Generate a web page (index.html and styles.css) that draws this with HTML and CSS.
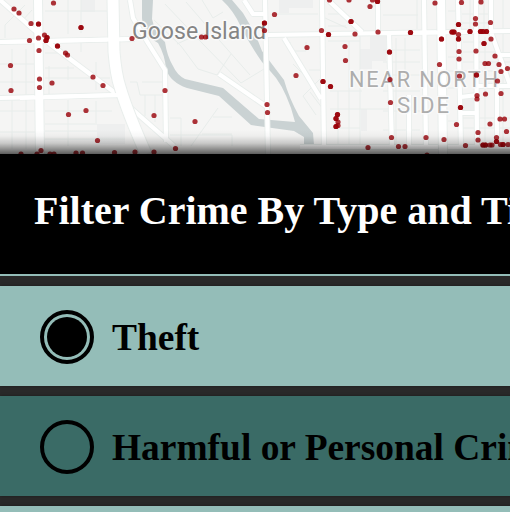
FILE: index.html
```html
<!DOCTYPE html>
<html lang="en">
<head>
<meta charset="utf-8">
<title>Chicago Crime Map</title>
<link rel="stylesheet" href="styles.css">
</head>
<body>
<main class="app">
<section class="map">
<svg class="map-canvas" viewBox="0 0 510 154" width="510" height="154" aria-label="Crime map">
<defs>
<path id="streets" d="M0 42L135 39M0 98L118 95M0 0L50 44L118 95L132 109L174 146M130 0L133 18L148 43L165 70L166 142M244 0L253 14H266M265 0L268 154M268 35L510 31M322 0L324 149M328 0L362 32M378 0V32M389 34L392 149M424 0L426 149M409 95V146M458 0L461 149M476 0L477 149M491 32L510 85M497 81V149M461 97L477 95M461 113H477M219 74L267 107M284 38L321 99M495 55H510M477 86H510M300 147H510M491 0V31"/>
</defs>
<g class="blocks"><path d="M81 0h14v12H81zM97 124h28v20H97zM279 0h34v8h-24v5h-10zM370 36h16v25h-16zM360 49h12v20h-12zM361 109h6v22h-6zM462 98h13v12h-13z"/></g>
<g class="water">
<path d="M142 0H153L152 19Q155 34 165 42Q167 56 173 66Q177 75 185 79L223 88L259 119L295 122L291 108Q282 83 271 72L262 62Q250 45 241 27Q234 11 222 0H232L243 13Q256 34 262 51L284 80Q289 98 299 116L313 133L314 145H304V137L294 131L251 125L219 96L187 88Q170 82 166 69Q165 55 158 43Q143 35 142 18Z"/>
</g>
<g class="minor">
<path d="M12 49V149M26 49V149M49 66V94M68 0V34M68 66V80M68 100V146M81 0V33M96 62V90M96 101V123M81 40V52M0 64H37M0 82H37M0 111H37M0 132H37M45 11H107M45 53H58M45 68H74M45 78H110M45 111H112M45 124H97M45 131H97M45 139H125M5 38V25L25 5M21 22L32 10"/>
<path d="M130 82H137L140 95H165M142 82H163M145 95V116M155 95V122M170 118H181V146M170 135H232V146M191 146L218 108M213 117H232M202 134H232"/>
<path d="M154 20L181 46L198 69L217 75L231 54M165 4L202 43L241 83L264 69M186 2L205 24L250 75M202 0L213 18L223 12M177 44L190 38L212 31"/>
<path d="M275 14H318M328 14H342M328 26H346M328 33H376M328 41H360M290 42V51H306V42M293 64L306 77M309 70H320M320 79L303 96L316 115M310 92L323 109M325 18L347 28M338 91V146M349 41V146M360 35V146M330 91H362M330 109H388M330 128H360"/>
<path d="M366 6H378M383 15H418M396 38V146M405 38V84M417 0V29M383 50H420M383 62H420M383 75H420M383 91H420M383 111H420M383 130H420M448 11H457M448 57H457M448 71H457M448 88H457M448 121H457M470 0V32M484 0V34M503 0V146M462 14H488M462 23H488M463 42H481M463 52H495M463 62H510M463 71H510M463 118H510M463 128H510M485 37V145"/>
</g>
<use class="road casing" href="#streets"/>
<use class="road" href="#streets"/>
<path class="arterial-edge" d="M38 0L40 154M441 0L443 154"/>
<path class="arterial" d="M38 0L40 154M441 0L443 154"/>
<path class="highway-edge" d="M113 0L114 52Q116 75 120 87Q127 111 146 154"/>
<path class="crossing" d="M0 42L132 39M20 98L118 95M410 33L470 32M26 23L54 47"/>
<path class="highway" d="M113 0L114 52Q116 75 120 87Q127 111 146 154"/>
<g class="labels">
<text class="place" x="132" y="39" textLength="134" lengthAdjust="spacingAndGlyphs">Goose Island</text>
<text class="district" x="349" y="87" textLength="151" lengthAdjust="spacingAndGlyphs">NEAR NORTH</text>
<text class="district" x="397" y="113" textLength="54" lengthAdjust="spacingAndGlyphs">SIDE</text>
</g>
<g id="dots" class="dots"></g>
</svg>
</section>
<header class="heading"><h2>Filter Crime By Type and Time</h2></header>
<div class="filters">
<div class="option light"><span class="radio checked"></span><h3>Theft</h3></div>
<div class="option dark"><span class="radio"></span><h3>Harmful or Personal Crimes</h3></div>
<div class="option light"></div>
</div>
</main>
<script src="map.js"></script>
</body>
</html>
```
FILE: styles.css
```css
* { box-sizing: border-box; }
body {
  margin: 0;
  background: #292929;
  font-family: "Liberation Serif", "Times New Roman", serif;
}
.app { width: 510px; height: 512px; overflow: hidden; }
.map { position: relative; height: 154px; background: #f5f5f4; overflow: hidden; }
.map::after {
  content: "";
  position: absolute;
  inset: auto 0 0;
  height: 24px;
  background: linear-gradient(rgba(0,0,0,0), rgba(0,0,0,.03) 25%, rgba(0,0,0,.18) 55%, rgba(0,0,0,.42) 80%, rgba(0,0,0,.62));
}
.map-canvas { display: block; }
.blocks { fill: #eeefef; }
.water { fill: #cad2d3; }
.minor { fill: none; stroke: #e8edeb; stroke-width: 1; }
.road { fill: none; stroke: #fff; stroke-width: 4.2px; stroke-linejoin: round; }
.road.casing { stroke: #e9eeec; stroke-width: 6px; }
.arterial { fill: none; stroke: #fff; stroke-width: 8; }
.arterial-edge { fill: none; stroke: #e9eeec; stroke-width: 10; }
.crossing { fill: none; stroke: #fff; stroke-width: 4; }
.highway-edge { fill: none; stroke: #e9eeec; stroke-width: 13; }
.highway { fill: none; stroke: #fff; stroke-width: 11; }
.labels { font-family: "Roboto", sans-serif; paint-order: stroke; stroke: #fafafa; stroke-width: 3px; stroke-linejoin: round; }
.place { font-size: 23.5px; fill: #858585; }
.district { font-size: 22.5px; letter-spacing: 2px; fill: #adadad; }
.dots { fill: #990008; fill-opacity: .8; }
.heading {
  height: 122px;
  padding: 34px 0 0 34px;
  background: #000;
  border-bottom: 2px solid #94bdb8;
  color: #fff;
}
h2, h3 { margin: 0; font-weight: bold; white-space: nowrap; }
h2 { font-size: 40px; line-height: 46px; }
h3 { padding-top: 2px; font-size: 37.44px; line-height: 44px; }
.filters { display: grid; gap: 10px; padding-top: 10px; }
.option {
  display: flex;
  align-items: center;
  gap: 18px;
  height: 100px;
  padding: 2px 0 0 40px;
  box-shadow: 0 0 3px rgba(0,0,0,.35);
}
.light { background: #94bdb8; }
.dark { background: #3a6b66; }
.radio { flex: none; width: 54px; height: 54px; border: 4px solid #000; border-radius: 50%; }
.checked { padding: 3px; }
.checked::before { content: ""; display: block; height: 40px; border-radius: 50%; background: #000; }
```
FILE: map.js
```js
const incidents = [
  [14,9],[19,13],[53.5,3],[31,23.5],[38.5,24,2],[81,27.5,2],[29.5,40.5],[38.5,38],[44.5,35],[47,37.5,2],[46,40.5,2],[39,50.5],[57.5,46,2],[65.5,53],[67.5,55],[10.5,65.5],[39.5,79],[39.5,87.5],[52,83],[11,90.5],[93,77],[103,85.5],[68.5,114.5],[86,110.5],[97.5,140.5],[41,150.5],[21,154],[37,154],[50,154],[54,154],[76,153],[82.5,153],[114.5,152.5],[135,152],[154,152],
  [132,38.5],[165,90.5],[154,115.5],[195,121.5],[175.5,148.5],[201.5,37],[205.5,37],[274.5,14.5],[264.5,23,2],[264.5,30.5],[321.5,30.5],[328.5,34.5,2],[307,47.5],[296,75.5],[267,104.5],[267.5,112.5],[323,81.5,2],[330.5,86.5,2],
  [329.5,0],[349,0],[370,6.5],[372.5,0],[377.5,1.5,2],[351,21.5,2],[355,34],[378,32],[410.5,32.5,2],[345,46.5],[345.5,60.5],[389.5,52,2],[390,79.5],[390.5,102.5],[391.5,137.5],[337.5,114.5,2],[336,118.5,2],[338,122],[338,125.5],[336,126.5,2],[426,137.5],[368,147.5],[398.5,146.5],[405,146.5],[427,155],
  [435,3],[461.5,2.5],[481,2],[458.5,24.5,2],[475.5,18.5],[475.5,24],[490.5,22.5],[452,32,2],[454,32,2],[458.5,34.5],[458.5,39,2],[441.5,39,2],[470,31.5,2],[480.5,31.5,2],[483,31.5,2],[486.5,31.5,2],[484,43.5,2],[491,39],[459,51.5],[476,51],[459,59],[439.5,64.5],[495,56],[485,63.5],[488.5,63.5],[499,64.5],[507.5,68.5],[501,71.5],[459.5,76],[476.5,75,2],[497.5,81],[501,93.5],[485.5,94],[477,95.5],[477,99],[460.5,107.5,2],[456.5,124.5],[500,119],[504.5,119],[490,124],[506.5,131.5],[478,132.5],[444,139.5],[478,140],[496.5,137.5],[496.5,141.5,2],[465.5,145.5],[483,145,2],[485.5,145,2],[490,145],[492,145],[500.5,144.5],[503,144.5,2],[508,144.5]
];

const dots = document.getElementById("dots");
for (const [x, y, count = 1] of incidents) {
  for (let i = 0; i < count; i++) {
    const dot = document.createElementNS("http://www.w3.org/2000/svg", "circle");
    dot.setAttribute("cx", x);
    dot.setAttribute("cy", y);
    dot.setAttribute("r", 2.6);
    dots.appendChild(dot);
  }
}
```
